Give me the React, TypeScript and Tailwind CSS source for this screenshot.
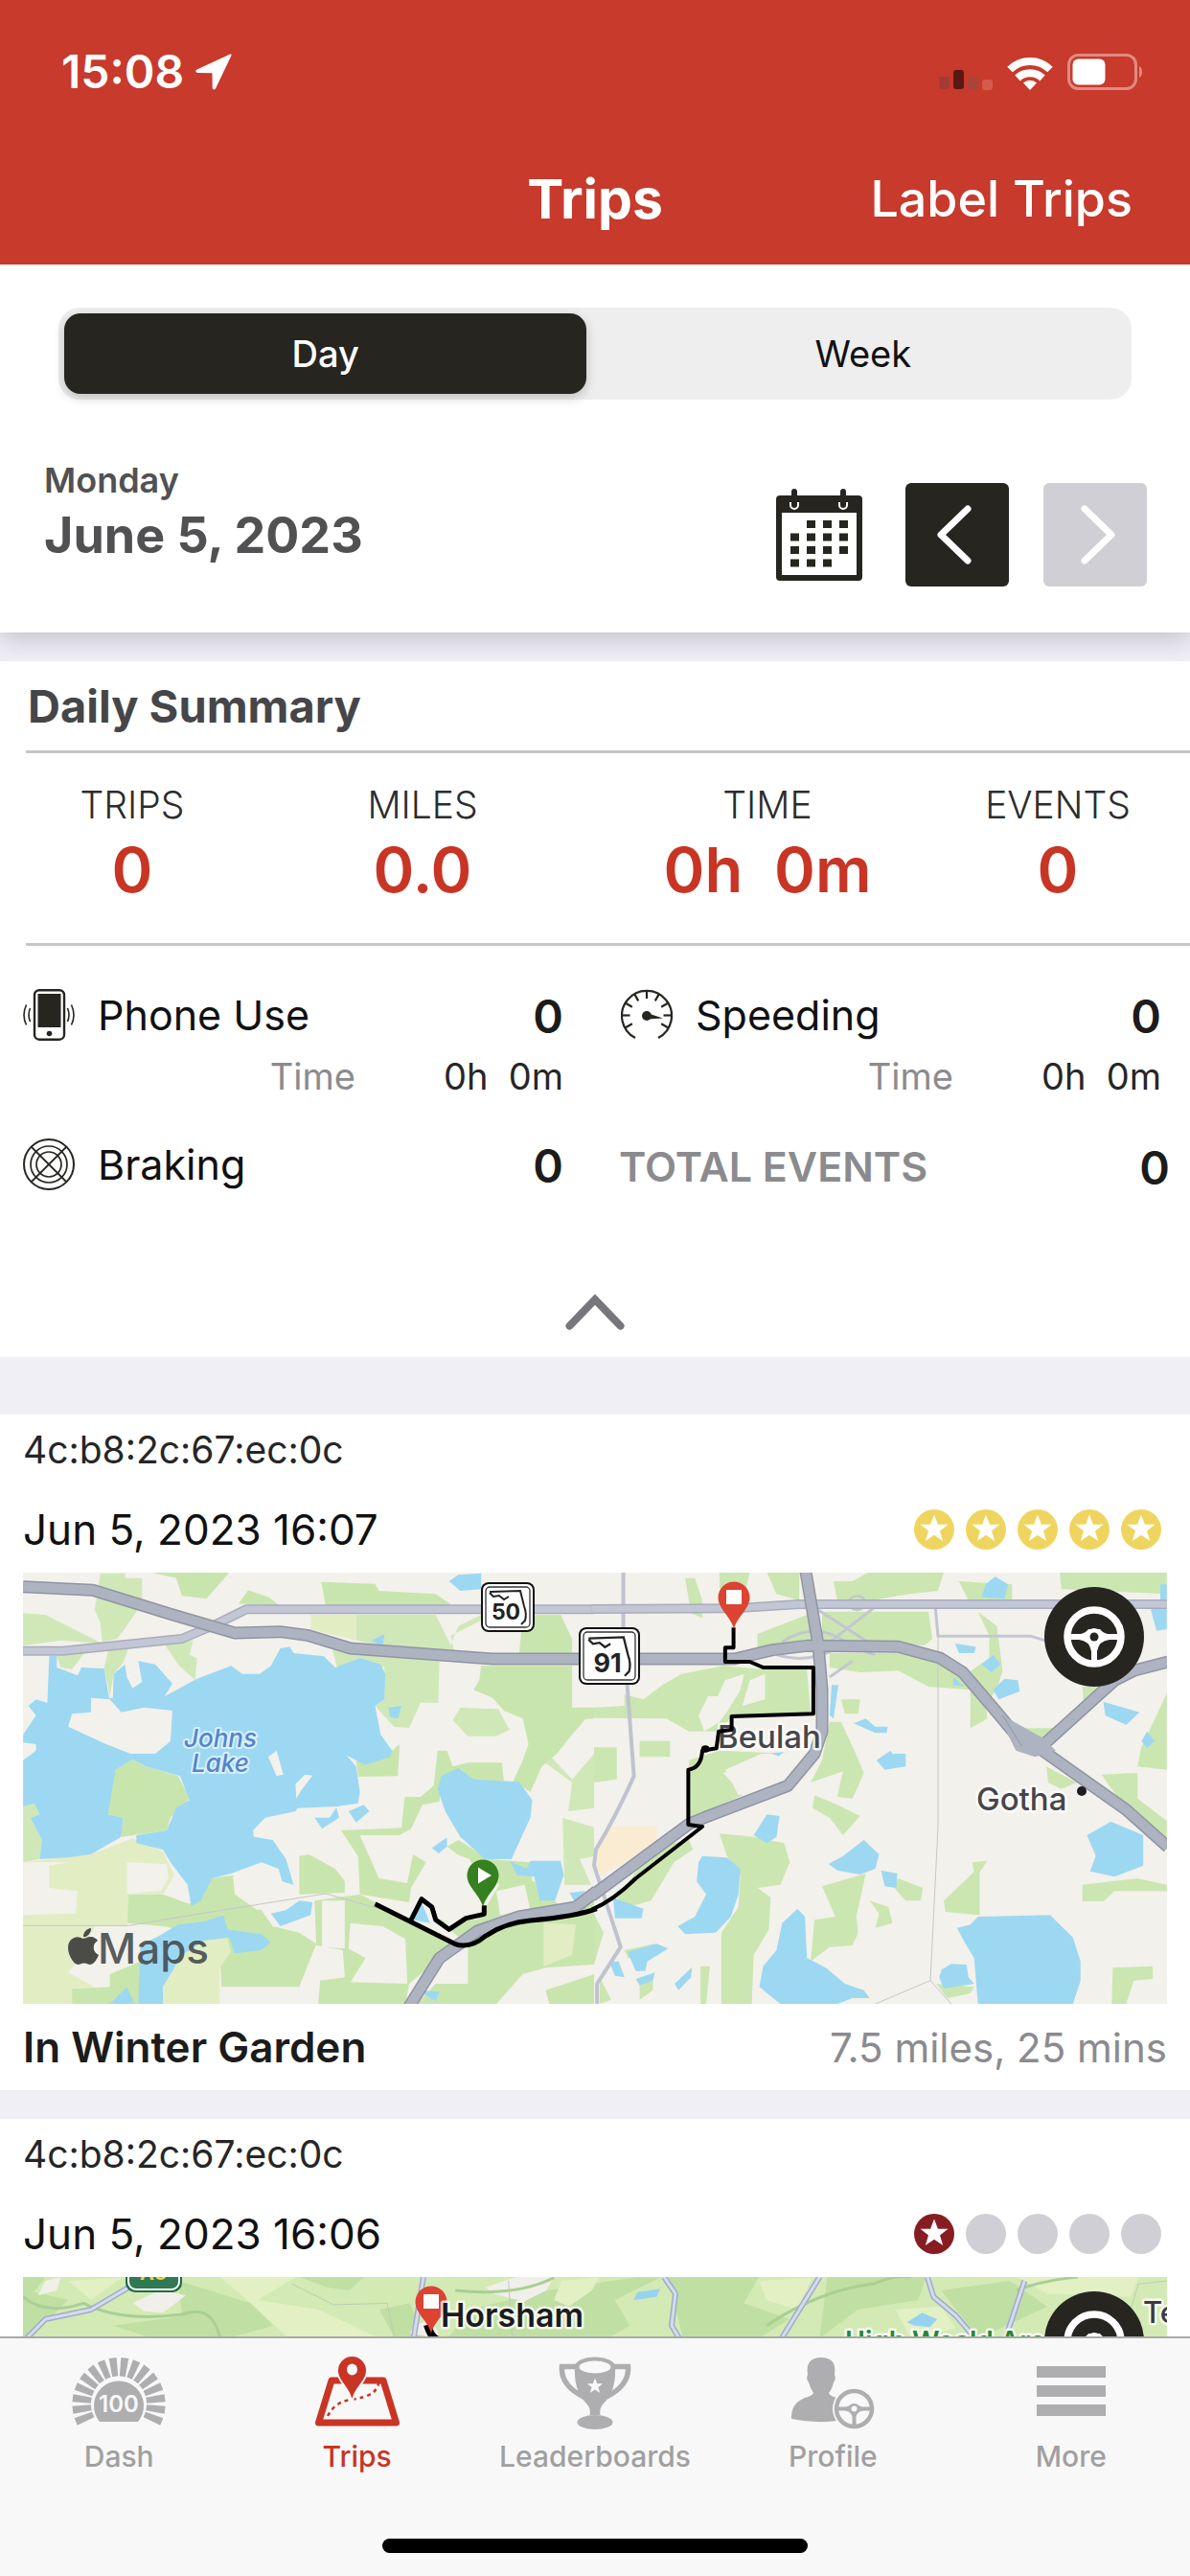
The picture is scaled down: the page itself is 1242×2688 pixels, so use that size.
import React from "react";
import { FaApple } from "react-icons/fa";

const STAR =
  "M21 5.500l3.900 10.300h10.600l-8.500 6.600 3.200 10.600-9.200-6.300-9.200 6.300 3.200-10.600-8.500-6.600h10.600z";

function LocationArrow() {
  return (
    <svg viewBox="0 0 38 38" className="h-[38px] w-[38px]" fill="#fff" aria-hidden="true">
      <path d="M36.2 0.6 1.6 16.600c-2 1-1.500 3.300.7 3.400l14.600.2c.4 0 .6.2.6.6l.2 14.600c.1 2.300 2.600 2.700 3.500.7L37.400 1.900c.5-1.100-.200-1.800-1.200-1.300z" />
    </svg>
  );
}

function SignalBars() {
  return (
    <svg viewBox="0 0 56 22" className="h-[22px] w-14" aria-hidden="true">
      <rect x="0" y="8" width="11" height="13" rx="2" fill="#a53c31" />
      <rect x="15" y="1" width="11" height="20" rx="3" fill="#5b1813" />
      <rect x="30" y="8" width="11" height="13" rx="3" fill="#a8443a" />
      <rect x="45" y="11" width="11" height="11" rx="3" fill="#d65b4c" />
    </svg>
  );
}

function Wifi() {
  return (
    <svg viewBox="0 0 50 36" className="h-9 w-[50px]" aria-hidden="true">
      <g fill="none" stroke="#fff" strokeWidth="8">
        <path d="M4 14.500a30 30 0 0 1 42 0" />
        <path d="M12 23.500a19 19 0 0 1 26 0" />
      </g>
      <path d="M25 36l-7-7.500a10 10 0 0 1 14 0z" fill="#fff" />
    </svg>
  );
}

function Battery() {
  return (
    <svg viewBox="0 0 80 38" className="h-[38px] w-20" aria-hidden="true">
      <rect x="1.500" y="1.500" width="70" height="35" rx="10" fill="none" stroke="#e08a80" strokeWidth="3" />
      <rect x="5.500" y="5.500" width="34" height="27" rx="6" fill="#fff" />
      <path d="M75 13c4 1.500 4 10.500 0 12z" fill="#e08a80" />
    </svg>
  );
}

function CalendarIcon() {
  const dots: number[][] = [
    [1, 0], [2, 0], [3, 0],
    [0, 1], [1, 1], [2, 1], [3, 1],
    [0, 2], [1, 2], [2, 2], [3, 2],
    [0, 3], [1, 3], [2, 3],
  ];
  return (
    <svg viewBox="0 0 90 96" className="h-24 w-[90px]" aria-hidden="true">
      <rect y="7" width="90" height="89" rx="4" fill="#262520" />
      <rect x="6" y="25" width="78" height="65" fill="#fff" />
      <rect x="16" y="0" width="6" height="17" rx="3" fill="#262520" />
      <rect x="67" y="0" width="6" height="17" rx="3" fill="#262520" />
      <path d="M15 14v3a4 4 0 0 0 8 0v-3M66 14v3a4 4 0 0 0 8 0v-3" fill="none" stroke="#fff" strokeWidth="2" />
      {dots.map(([c, r]) => (
        <rect key={`${c}-${r}`} x={15 + c * 17} y={33 + r * 13.500} width="9" height="8" fill="#262520" />
      ))}
    </svg>
  );
}

function PhoneIcon() {
  return (
    <svg viewBox="0 0 54 54" className="size-[54px]" fill="none" stroke="#262520" aria-hidden="true">
      <rect x="12" y="1.200" width="31" height="51.500" rx="5" strokeWidth="2.400" />
      <rect x="15.500" y="5" width="24" height="35" fill="#262520" stroke="none" />
      <circle cx="27.500" cy="46.500" r="2.800" fill="#262520" stroke="none" />
      <path d="M7.500 20q-3 7 0 14M3.500 16.500q-5 11 0 21M46.500 20q3 7 0 14M50.500 16.500q5 11 0 21" strokeWidth="1.600" />
    </svg>
  );
}

function SpeedIcon() {
  const ticks = [-120, -90, -60, -30, 0, 30, 60, 90, 120];
  return (
    <svg viewBox="0 0 54 54" className="size-[54px]" fill="none" stroke="#262520" strokeWidth="2.200" aria-hidden="true">
      <path d="M15 51A26 26 0 1 1 39 51" />
      {ticks.map((a) => (
        <path key={a} d="M27 2v8" transform={`rotate(${a} 27 27.500)`} />
      ))}
      <circle cx="27" cy="28" r="5" fill="#262520" stroke="none" />
      <path d="M27 25l17 5.500-17 1z" fill="#262520" stroke="none" />
    </svg>
  );
}

function BrakeIcon() {
  return (
    <svg viewBox="0 0 54 54" className="size-[54px]" fill="none" stroke="#262520" strokeWidth="1.700" aria-hidden="true">
      <circle cx="27" cy="27" r="26" strokeWidth="2" />
      <circle cx="27" cy="27" r="19" />
      <circle cx="27" cy="27" r="13" />
      <path d="M8.600 8.600l36.800 36.800M45.400 8.600L8.600 45.400" strokeWidth="2" />
    </svg>
  );
}

function Wheel({ cx, cy }: { cx: number; cy: number }) {
  return (
    <g transform={`translate(${cx} ${cy})`}>
      <circle r="52" fill="#262520" />
      <circle r="28" fill="none" stroke="#fff" strokeWidth="7.500" />
      <path d="M-26-3h12q5-1 8-5h12q3 4 8 5h12v6h-10q-11 1-13 12v14h-6v-14q-2-11-13-12h-10z" fill="#fff" />
      <circle r="9" fill="#fff" />
      <circle r="4.500" fill="#262520" />
    </g>
  );
}

function Pin({ x, y, kind }: { x: number; y: number; kind: "start" | "end" }) {
  return (
    <g transform={`translate(${x} ${y})`}>
      <path
        d="M0 33C-3 20-16.500 12-16.500 0a16.500 16.500 0 0 1 33 0C16.500 12 3 20 0 33z"
        fill={kind === "start" ? "#35801f" : "#dc4331"}
      />
      {kind === "start" ? (
        <path d="M-5-8.500v17L9 0z" fill="#fff" />
      ) : (
        <rect x="-8" y="-8" width="16" height="15" fill="#fff" />
      )}
    </g>
  );
}

function Shield({ x, y, w, h, label, size }: { x: number; y: number; w: number; h: number; label: string; size: number }) {
  return (
    <g transform={`translate(${x} ${y})`}>
      <rect width={w} height={h} rx="8" fill="#111" />
      <rect x="2" y="2" width={w - 4} height={h - 4} rx="6" fill="#fff" />
      <rect x="5" y="5" width={w - 10} height={h - 10} rx="4" fill="none" stroke="#333" strokeWidth="1.300" />
      <g transform={`scale(${w / 56} ${h / 52})`} fill="none" stroke="#222" strokeWidth="2">
        <path d="M9 10l32-1 4 16q3 8 1 15l-4 4M9 11l4 4 6-1 5 4 5-3" />
      </g>
      <text x={w / 2 - 2} y={h - 13} textAnchor="middle" fontSize={size} fontWeight="700" fill="#222" stroke="#fff" strokeWidth="3" paintOrder="stroke">
        {label}
      </text>
    </g>
  );
}

/* Western half: drawn in a finer grid and scaled into the map. */
const westLightGreen = [
  "61,160 120,165 270,255 160,245 61,262",
  "265,35 330,35 330,50 375,50 375,130 340,190 310,240 270,250 265,190 250,150",
  "150,295 235,265 190,335 160,330", "290,255 345,250 325,315 300,350 290,420 275,330",
  "430,250 510,245 500,290 520,300 515,370 470,320",
  "940,165 1150,165 1190,260 1210,200 1270,165 1300,165 1190,230 1200,285 1040,270 940,245",
  "870,240 1160,290 1157,440 1110,440 1080,520 1040,515 990,450 1015,430 1015,330 950,300 890,330",
  "1195,495 1215,455 1315,460 1345,525 1310,545 1235,545",
  "1430,620 1455,610 1510,680 1568,600 1568,770 1500,780 1510,690",
  "1485,800 1568,830 1568,920 1530,930 1560,1010 1490,1010 1488,930",
  "61,760 90,755 105,790 80,800 110,870 105,930 61,940",
];
const westGreen = [
  "400,33 605,33 545,115 480,105 465,50",
  "848,62 990,68 1000,90 1150,100 1200,140 860,138",
  "630,130 655,88 710,110 740,138",
  "1270,325 1510,325 1510,455 1568,455 1568,490 1545,492 1510,540 1470,600 1430,640 1400,720 1355,685 1380,620 1395,570 1380,490 1330,465 1300,425 1250,400 1265,370",
  "1380,165 1480,165 1510,240 1510,290 1370,290",
  "1155,590 1180,590 1195,640 1235,628 1325,628 1330,685 1250,690 1210,650 1165,690 1160,750 1115,760 1085,835 1055,855 950,855 1000,990 1075,1005 1090,915 1125,940 1085,1020 1080,1065 950,1040 945,920 900,840 1060,832 1068,735 1110,735 1145,700",
  "940,620 1010,615 1055,570 1050,670 945,672",
  "790,920 815,915 885,960 910,1000 910,1035 790,1040",
  "305,650 350,618 385,640 470,670 500,740 450,800 440,840 320,860 325,800 285,790 290,700",
  "335,1040 430,1040 500,1070 560,990 615,980 625,1040 690,1090 720,1140 790,1160 835,1195 790,1330 585,1330 580,1230 600,1180 430,1140 335,1130",
  "830,1060 950,1040 1100,1130 1200,1200 1160,1240 1080,1320 1070,1383 840,1383 845,1310 910,1300 905,1215 835,1200",
  "1160,1120 1260,1120 1330,990 1410,1000 1490,1090 1568,1060 1568,1260 1440,1270 1380,1290 1310,1383 1100,1383 1150,1320 1235,1320 1235,1200",
  "1130,1040 1160,960 1190,950 1150,1060", "1180,890 1210,870 1290,930 1400,940 1410,1060 1300,1000",
  "190,1335 290,1330 290,1290 370,1250 430,1250 430,1383 190,1383",
  "1440,1340 1568,1290 1568,1383 1450,1383",
];
const westYellow = [
  "820,165 940,165 940,245 870,225 820,210",
  "61,940 240,915 350,865 430,905 460,980 430,1040 340,1040 335,1140 61,1140",
  "61,1140 250,1140 190,1285 250,1330 190,1335 190,1383 61,1383",
  "470,1190 600,1175 610,1220 580,1270 580,1383 430,1383 430,1330",
  "1435,1130 1520,1135 1510,1230 1435,1265",
];
const westLand = [
  "335,940 440,945 445,990 425,1030 335,1038", "61,940 185,940 130,950 130,1020 205,1030 200,1100 61,1105",
  "615,985 690,940 735,960 745,1000 775,1010 730,1060 680,1090 620,1040",
  "925,1130 1010,1140 1070,1180 1075,1320 925,1315 965,1240 920,1210",
  "1095,1030 1180,905 1240,930 1290,1050 1240,1110 1185,1140",
  "1310,1030 1385,1010 1400,1090 1320,1105", "180,1285 245,1190 250,1330",
  "850,1060 910,1060 910,1210 850,1205",
];
const westWater = [
  "130,293 150,293 150,330 205,355 215,330 275,333 288,425 298,425 300,350 330,320 335,360 350,395 375,375 365,310 410,320 455,380 435,420 520,365 610,325 640,350 685,350 715,325 740,270 765,265 775,285 855,295 885,330 950,300 1005,320 1017,350 1015,430 990,450 1005,540 1035,590 1030,610 965,635 915,605 940,640 950,720 945,755 890,765 785,770 780,780 700,800 668,840 670,860 720,870 755,930 775,1010 745,1000 735,960 690,940 610,975 560,990 530,1060 505,1078 495,1010 450,940 430,900 360,880 360,855 440,840 465,770 500,745 475,670 385,640 350,618 305,650 285,790 325,800 320,860 240,915 180,925 105,930 110,870 80,800 105,790 90,755 61,765 61,620 95,590 95,570 61,565 61,540 95,480 75,450 95,430 125,440",
  "1155,710 1165,670 1210,645 1250,680 1370,688 1405,745 1400,800 1350,930 1280,930 1215,860 1175,780",
  "1345,935 1390,960 1400,935 1480,935 1488,980 1465,1060 1425,1060 1410,985 1365,980",
  "1185,60 1210,40 1270,35 1270,85 1215,90", "1025,455 1060,450 1050,490 1030,485",
  "980,245 1015,225 1010,265", "1140,895 1180,862 1180,890 1158,912",
  "715,1100 755,1090 790,1060 825,1065 820,1105 740,1140",
  "365,1383 370,1200 420,1170 470,1135 540,1125 590,1105 600,1150 690,1165 715,1190 690,1215 620,1225 605,1175 540,1185 480,1230 430,1330 430,1383",
  "290,1383 335,1330 355,1383", "1100,1340 1160,1345 1150,1375", "1090,1120 1115,1070 1135,1130",
  "830,800 870,800 888,768 895,800 850,835", "920,780 960,760 975,780 940,815", "1503,1035 1545,1030 1520,1070",
];
const westIslands = [
  "180,515 190,475 240,470 240,425 290,430 320,470 380,455 455,465 450,560 410,600 345,600 280,570",
  "708,610 730,590 748,665 730,670", "782,740 780,695 805,665 825,668 795,715",
];

/* Eastern half. */
const eastGreen = [
  "0,455 80,450 80,415 130,430 180,385 230,350 340,325 440,335 560,335 570,475 365,480 330,530 250,530 190,490 0,488",
  "240,50 265,50 285,120 285,175 255,160", "330,33 410,33 400,80 330,80", "455,33 540,33 540,120 480,100",
  "630,60 680,60 720,33 920,33 905,90 830,100 730,120 640,120",
  "600,155 880,155 890,240 870,260 680,255 600,250", "430,225 560,165 580,250 430,270",
  "620,330 700,345 800,340 880,390 990,400 990,520 1035,490 1030,440 1060,400 1075,340 1060,200 1010,155 1040,230 1040,300 980,350 860,285 620,285",
  "0,580 60,580 60,680 0,690", "120,560 200,560 200,610 120,610",
  "250,620 330,590 520,600 400,630 340,660 370,700 390,730 300,780 250,800",
  "650,430 700,430 695,475 660,475", "620,500 650,500 685,590 710,660 680,740 640,735 655,655 570,690 600,620",
  "580,730 640,760 700,795 655,855 620,800 575,770",
  "330,850 420,860 500,880 515,940 490,1010 430,1020 465,1050 460,1150 420,1230 415,1383 335,1383 335,1160 380,1080 385,980 350,920",
  "600,1015 715,975 690,1110 695,1160 680,1200 620,1205 570,1250 580,1120 635,1110",
  "800,990 865,1020 860,1060 820,1060 790,1020", "725,1060 775,1080 785,1130 740,1145 750,1100",
  "920,1060 1000,970 995,940 1035,935 1015,970 1015,1105 925,1095", "1285,1010 1430,990 1507,1010 1507,1030 1370,1030 1340,1062 1285,1062",
  "1365,1270 1470,1265 1470,1305 1420,1310 1400,1383 1362,1383",
  "1190,640 1270,690 1230,710 1195,690", "1090,520 1220,520 1180,580", "1430,640 1440,580 1480,480 1507,410 1507,650",
  "1335,665 1430,660 1430,740 1507,810 1507,870 1410,790", "1225,33 1507,33 1507,100 1230,85", "1285,390 1360,390 1290,470",
  "160,890 250,870 260,900 210,940 150,1060 90,1080 60,1050", "0,1100 25,1160 0,1260", "15,1300 45,1370 15,1383",
  "280,1265 305,1265 295,1383 280,1383", "900,1320 1000,1330 990,1350 930,1365", "80,1215 160,1195 150,1240 90,1240", "120,1320 155,1310 155,1340 120,1370",
  "960,60 1100,70 1100,120 985,120",
];
const eastLand = [
  "345,370 395,350 385,400 355,460 330,500 290,530 275,480 300,420 325,420",
  "410,370 450,350 450,430 390,450", "345,650 440,600 530,600 510,650 420,720 380,730",
];
const eastWater = [
  "285,920 350,925 385,960 380,1040 360,1110 320,1160 240,1165 220,1140 265,1110 295,1040 270,1000 275,940",
  "535,1085 555,1110 560,1240 610,1270 660,1320 710,1340 725,1365 680,1365 640,1383 490,1383 435,1330 445,1265 480,1215 495,1130",
  "1010,1110 1200,1105 1260,1175 1280,1250 1280,1310 1260,1383 1010,1383 1000,1240 975,1190 955,1145 990,1135",
  "915,1275 940,1258 980,1260 985,1300 1000,1320 920,1335 908,1300",
  "710,870 750,915 740,960 700,978 640,965 617,945 655,920", "755,965 798,975 795,1020 765,1015",
  "455,790 488,795 480,860 455,880 420,855", "1360,812 1445,855 1445,950 1370,985 1305,968 1320,920 1297,855",
  "1340,437 1435,470 1400,510 1345,480", "1455,530 1475,560 1455,582 1440,560", "1055,45 1090,70 1080,115 1020,110 1030,70",
  "1490,70 1507,70 1507,210 1480,215 1465,150 1490,120", "950,255 1005,265 1000,285 960,285", "1020,320 1050,290 1070,320 1045,345",
  "1050,400 1080,365 1115,370 1120,405 1065,430", "945,360 975,390 945,385", "683,505 715,490 740,515 773,515 770,535 740,535",
  "743,620 780,590 785,600 820,600 820,640 765,650", "625,385 643,385 630,490 620,480", "50,1050 130,1085 125,1115 55,1115",
  "88,1220 165,1195 195,1210 140,1250 135,1280 110,1280", "40,1250 65,1250 80,1300 55,1295", "110,1305 160,1285 155,1310 120,1325",
  "212,1320 258,1268 255,1300 222,1340", "465,598 500,595 485,608",
];

function Shapes({ points, fill }: { points: string[]; fill: string }) {
  return (
    <g fill={fill}>
      {points.map((p) => (
        <polygon key={p} points={p} />
      ))}
    </g>
  );
}

function Lines({ paths, color, width }: { paths: string[]; color: string; width: number }) {
  return (
    <g fill="none" stroke={color} strokeWidth={width} strokeLinejoin="round">
      {paths.map((d) => (
        <path key={d} d={d} vectorEffect="non-scaling-stroke" />
      ))}
    </g>
  );
}

const westMinor = ["M61 278H165L480 240 560 200 650 148H1568"];
const westMajor = [
  "M61 77L245 88 450 163 620 222 740 218 815 230 925 270 1300 303H1575",
  "M1078 1395L1160 1240 1260 1155 1370 1110 1520 1080 1575 1030",
];
const westRoute = [
  "M990 1070L1200 1195Q1240 1212 1280 1172 1330 1130 1400 1122 1520 1110 1575 1085",
  "M1085 1120L1113 1055 1140 1080 1150 1120 1185 1150 1230 1115 1278 1102V1075",
];
const eastMinor = ["M-6 147L370 145 540 132H1507"];
const eastMajor = [
  "M0 303H370L470 275 560 262 800 265 910 300 970 345 1060 470 1130 570 1180 590 1400 775 1510 892",
  "M-6 1045L250 820 290 800 510 700 580 600 600 530V400L590 260 557 30",
  "M1175 580L1370 370 1420 340 1510 312",
];
const eastRoute = [
  "M-6 1088Q50 1060 110 990L285 828 248 822V650Q282 645 285 590L322 583 328 530 362 525V483L577 475V330H445L410 312H345V268H367V205",
];
const eastLanes = [
  "M77 33V220M87 380L105 670Q60 790 5 900L0 950 70 1205 8 1320V1383",
];
const eastTrails = [
  "M898 140L905 232H1150L1200 250M590 150L720 250M740 140L610 260M495 250Q570 190 640 235T740 290M480 290Q560 320 640 270M620 360L680 310",
];
const eastHair = ["M905 232V830L885 1310 740 1383M885 1310L940 1383"];

function WinterGardenMap() {
  return (
    <svg viewBox="0 0 1194 450" className="block h-auto w-full" role="img" aria-label="Trip route in Winter Garden">
      <rect width="1194" height="450" fill="#f3f1eb" />
      <g transform="translate(-24 -11) scale(0.39541 0.33333)">
        <Shapes points={westLightGreen} fill="#d0e8b8" />
        <Shapes points={westGreen} fill="#c9e5ae" />
        <Shapes points={westYellow} fill="#e2edc4" />
        <Shapes points={westLand} fill="#f3f1eb" />
        <Shapes points={westWater} fill="#9dd8f2" />
        <Shapes points={westIslands} fill="#f3f1eb" />
        <Lines paths={["M61 1138H340L480 1110 860 1038 1000 1085"]} color="#c6c6ca" width={1} />
      </g>
      <g transform="translate(596 -11) scale(0.39668 0.33333)">
        <Shapes points={["30,830 165,825 165,880 20,980 5,960 10,900", "1385,40 1460,35 1455,65 1420,75"]} fill="#faecd2" />
        <Shapes points={eastGreen} fill="#cbe6b1" />
        <Shapes points={eastLand} fill="#f3f1eb" />
        <Shapes points={eastWater} fill="#9dd8f2" />
        <Lines paths={eastHair} color="#c6c6ca" width={1} />
        <Lines paths={eastTrails} color="#c3c6d2" width={3} />
        <Lines paths={eastLanes} color="#bfc3cf" width={4} />
        <circle cx="692" cy="128" r="22" fill="none" stroke="#c3c6d2" strokeWidth="7" />
      </g>
      <g transform="translate(-24 -11) scale(0.39541 0.33333)">
        <Lines paths={westMinor} color="#a8acbd" width={10} />
        <Lines paths={westMinor} color="#c3c6d5" width={7} />
      </g>
      <g transform="translate(596 -11) scale(0.39668 0.33333)">
        <Lines paths={eastMinor} color="#a8acbd" width={10} />
        <Lines paths={eastMinor} color="#c3c6d5" width={7} />
        <Lines paths={eastMajor} color="#9095a3" width={13} />
      </g>
      <g transform="translate(-24 -11) scale(0.39541 0.33333)">
        <Lines paths={westMajor} color="#9095a3" width={13} />
        <Lines paths={westMajor} color="#aeb3c2" width={10} />
      </g>
      <g transform="translate(596 -11) scale(0.39668 0.33333)">
        <Lines paths={eastMajor} color="#aeb3c2" width={10} />
        <polygon points="1060,470 1180,550 1215,590 1160,610 1110,590" fill="#aeb3c2" />
        <Lines paths={["M1075 480L1125 575"]} color="#9095a3" width={1} />
      </g>
      <g fontFamily="Inter, sans-serif">
        <text x="725" y="183" fontSize="33" fontWeight="500" fill="#46464a" stroke="#fff" strokeOpacity="0.8" strokeWidth="5" strokeLinejoin="round" paintOrder="stroke">
          Beulah
        </text>
        <text x="995" y="248" fontSize="33" fontWeight="500" fill="#46464a" stroke="#fff" strokeOpacity="0.8" strokeWidth="5" strokeLinejoin="round" paintOrder="stroke">
          Gotha
        </text>
        <circle cx="1105" cy="228" r="5" fill="#1d1d1f" />
        <g fontSize="26" fontWeight="500" fontStyle="italic" fill="#5285cc" stroke="#d9f0fb" strokeWidth="4" strokeLinejoin="round" paintOrder="stroke" textAnchor="middle">
          <text x="206" y="182">Johns</text>
          <text x="206" y="208">Lake</text>
        </g>
        <text x="78" y="408" fontSize="44" fontWeight="500" fill="#44484a" fillOpacity="0.9">
          Maps
        </text>
        <Shield x={478} y={10} w={56} h={52} label="50" size={23} />
        <Shield x={580} y={57} w={64} h={60} label="91" size={27} />
      </g>
      <g transform="translate(44 371)">
        <FaApple size={38} color="#4b4c47" viewBox="0 32 384 448" width={32} />
      </g>
      <g strokeLinejoin="miter">
        <g transform="translate(-24 -11) scale(0.39541 0.33333)">
          <Lines paths={westRoute} color="#000" width={5} />
        </g>
        <g transform="translate(596 -11) scale(0.39668 0.33333)">
          <Lines paths={eastRoute} color="#000" width={4} />
          <circle cx="293" cy="585" r="11" />
        </g>
      </g>
      <Pin x={480} y={316} kind="start" />
      <Pin x={742} y={26} kind="end" />
      <Wheel cx={1118} cy={67} />
    </svg>
  );
}

function HorshamMap() {
  return (
    <svg viewBox="0 0 1194 450" className="block h-auto w-full" role="img" aria-label="Trip route near Horsham">
      <rect width="1194" height="450" fill="#d3eab5" />
      <g transform="translate(-24 -286) scale(0.79208 0.33333)">
        <Shapes
          points={[
            "30,858 60,858 45,905 90,930 60,1000 30,1050", "235,870 330,940 360,1010 300,1050 200,1050 150,1010 240,980",
            "395,858 480,858 460,900 430,890", "590,1050 620,960 720,900 840,858 870,860 810,930 830,1010 800,1050",
            "880,858 1000,858 980,940 1040,990 1000,1050 900,1050", "1090,858 1220,858 1210,930 1130,960 1080,1050",
            "1240,900 1330,870 1380,950 1290,1050", "500,960 540,940 560,1050 520,1050",
          ]}
          fill="#c0dfa3"
        />
        <Shapes
          points={[
            "290,858 390,858 340,930 420,960 500,1050 380,1050 340,960", "740,870 790,858 780,900 750,950 730,930",
            "1000,870 1070,860 1050,960 1010,930", "1340,858 1500,858 1490,920 1380,910", "90,870 160,860 120,930", "1180,960 1240,950 1260,1020 1200,1050",
          ]}
          fill="#e2f0c4"
        />
        <Shapes points={["60,870 80,858 75,900 50,915", "175,940 210,900 245,915 215,970 190,965", "640,890 680,858 730,858 720,900 690,935 650,910", "545,1010 570,990 580,1050 540,1035"]} fill="#f0efe9" />
        <Shapes points={["840,905 870,895 865,920 835,930", "1195,1000 1215,970 1235,990 1225,1015 1205,1010"]} fill="#97d3f0" />
        <Lines paths={["M30 920Q60 980 110 940 160 1000 240 975 280 940 290 1050M600 900Q680 920 730 860M1010 1010Q1080 900 1150 880 1180 850 1200 858M1340 900Q1370 870 1420 858"]} color="#a9cf93" width={3} />
        <Lines paths={["M385 880L440 945 510 940 520 1050M1490 960L1500 880 1538 870M670 870L675 1050"]} color="#bccdb2" width={1} />
        <Lines paths={["M35 1050L60 990 120 960 170 890M558 858L545 1050M875 858L890 910 885 1010 895 1050M1080 858L1030 1050M1222 858L1230 920 1260 980 1285 1050M1350 870L1325 1050"]} color="#9fabd0" width={6} />
        <Lines paths={["M35 1050L60 990 120 960 170 890M558 858L545 1050M875 858L890 910 885 1010 895 1050M1080 858L1030 1050M1222 858L1230 920 1260 980 1285 1050M1350 870L1325 1050"]} color="#d5dbe9" width={3} />
      </g>
      <g fontFamily="Inter, sans-serif">
        <rect x="107" y="-24" width="59" height="40" rx="10" fill="#1f6b45" />
        <rect x="110" y="-24" width="53" height="37" rx="8" fill="#2f7a53" stroke="#fff" strokeWidth="2" />
        <text x="136" y="3" textAnchor="middle" fontSize="20" fontWeight="700" fill="#f2d43b">A3</text>
        <path d="M422 50q4 14 12 16" fill="none" stroke="#000" strokeWidth="8" />
        <Pin x={426} y={26} kind="end" />
        <g stroke="#fff" strokeOpacity="0.8" strokeWidth="5" strokeLinejoin="round" paintOrder="stroke">
          <text x="436" y="52" fontSize="34" fontWeight="600" fill="#1b1b1d">Horsham</text>
          <text x="1169" y="48" fontSize="31" fontWeight="500" fill="#3b3b3e">Te</text>
          <text x="858" y="77" fontSize="28" fontWeight="600" fill="#1f8a34">High Weald Area</text>
        </g>
      </g>
      <Wheel cx={1118} cy={67} />
    </svg>
  );
}

function Stars({ filled, color }: { filled: number; color: string }) {
  return (
    <div className="flex gap-3 pr-1.5" role="img" aria-label={`${filled} of 5 stars`}>
      {[0, 1, 2, 3, 4].map((i) => (
        <svg key={i} viewBox="0 0 42 42" className="size-[42px]">
          <circle cx="21" cy="21" r="21" fill={i < filled ? color : "#d0cfd5"} />
          {i < filled && <path d={STAR} fill="#fff" />}
        </svg>
      ))}
    </div>
  );
}

function TripCard(props: {
  device: string;
  when: string;
  stars: number;
  starColor: string;
  map: React.ReactNode;
  place?: string;
  detail?: string;
}) {
  return (
    <article className="bg-white px-6 pt-3">
      <p className="text-[39px] leading-[50px] text-[#262626]">{props.device}</p>
      <div className="mt-7 mb-[15px] flex h-[60px] items-center justify-between">
        <h3 className="text-[44px] leading-[60px] text-[#111]">{props.when}</h3>
        <Stars filled={props.stars} color={props.starColor} />
      </div>
      {props.map}
      {props.place && (
        <div className="flex h-[90px] items-center justify-between">
          <p className="text-[44px] font-semibold text-[#1c1c1a]">{props.place}</p>
          <p className="text-[42px] text-[#8b8b8e]">{props.detail}</p>
        </div>
      )}
    </article>
  );
}

function Stat({ label, value }: { label: string; value: string }) {
  return (
    <div className="text-center">
      <dt className="text-[39px] leading-[48px] font-light text-[#2c2c2c]">{label}</dt>
      <dd className="mt-1 text-[65px] leading-[80px] font-semibold whitespace-pre text-[#c83524]">{value}</dd>
    </div>
  );
}

function EventRow({ icon, label, count, time }: { icon: React.ReactNode; label: string; count: string; time?: string }) {
  return (
    <div>
      <div className="flex h-[54px] items-center gap-6">
        {icon}
        <span className="flex-1 text-[43px] text-[#111]">{label}</span>
        <span className="pt-1 text-[48px] font-semibold text-[#1c1c1a]">{count}</span>
      </div>
      {time && (
        <div className="mt-[13px] flex justify-end gap-[92px] text-[38px] leading-[48px]">
          <span className="text-[#8b8b8e]">Time</span>
          <span className="whitespace-pre text-[#262626]">{time}</span>
        </div>
      )}
    </div>
  );
}

function DashIcon() {
  const angles = Array.from({ length: 16 }, (_, i) => -112.5 + i * 15);
  return (
    <svg viewBox="0 0 98 76" className="h-[76px] w-[98px]" aria-hidden="true">
      {angles.map((a) => (
        <path key={a} d="M-4-48.500h8L3-29h-6z" transform={`translate(49 49.500) rotate(${a})`} fill="#aeaeb1" />
      ))}
      <path d="M29 68a26 26 0 1 1 40 0z" fill="#aeaeb1" />
      <text x="49" y="58" textAnchor="middle" fontFamily="Inter, sans-serif" fontSize="24" fontWeight="600" fill="#f8f8f8">
        100
      </text>
    </svg>
  );
}

function TripsIcon() {
  return (
    <svg viewBox="0 0 90 76" className="h-[76px] w-[90px]" aria-hidden="true">
      <path d="M18 25h54l13.500 44h-81z" fill="none" stroke="#c83524" strokeWidth="7" strokeLinejoin="round" />
      <path d="M14 62Q22 47 38 45T62 37Q67 32 68 24" fill="none" stroke="#c83524" strokeWidth="2.500" strokeDasharray="4 4" />
      <path
        d="M39.500 44C36 31 25 25 25 14.500a14.500 14.500 0 0 1 29 0C54 25 43 31 39.500 44z"
        fill="#c83524"
        stroke="#f8f8f8"
        strokeWidth="4"
        paintOrder="stroke"
      />
      <ellipse cx="39.500" cy="13.500" rx="5.500" ry="6" fill="#f8f8f8" />
    </svg>
  );
}

function TrophyIcon() {
  return (
    <svg viewBox="0 0 76 76" className="size-[76px]" aria-hidden="true">
      <g fill="none" stroke="#aeaeb1" strokeWidth="5.500">
        <path d="M20 10.500H3.500Q2 30 26 42" />
        <path d="M56 10.500h16.500Q74 30 50 42" />
      </g>
      <path d="M17 9C22-2.500 54-2.500 59 9c1 19-3 31-12 40q-5 5-3.500 12h-11Q34 54 29 49C20 40 16 28 17 9z" fill="#aeaeb1" />
      <ellipse cx="38" cy="11" rx="16.500" ry="6.500" fill="#f8f8f8" />
      <ellipse cx="38" cy="68.500" rx="18.500" ry="7.500" fill="#aeaeb1" />
      <path d="M38 22.500l2.200 5.800h6l-4.800 3.700 1.800 6-5.200-3.600-5.200 3.600 1.800-6-4.800-3.700h6z" fill="#f8f8f8" />
    </svg>
  );
}

function ProfileIcon() {
  return (
    <svg viewBox="0 0 90 76" className="h-[76px] w-[90px]" aria-hidden="true">
      <path
        d="M19 19C17 7 22 1 33 1s16 6 14 18q2 4-1 8-2 8-5 11 1 3 8 5C60 46 64 55 64 64q-30 8-62 1C2 54 5 48 16 43q8-2 9-5-3-4-5-11-3-4-1-8z"
        fill="#aeaeb1"
      />
      <circle cx="67.500" cy="54.500" r="22.500" fill="#f8f8f8" />
      <circle cx="67.500" cy="54.500" r="18.500" fill="none" stroke="#aeaeb1" strokeWidth="4.500" />
      <path d="M49 52.500h10q4-1 6-3h5q2 2 6 3h10v4H77q-7 1-7.500 7v10h-4v-10q-.5-6-7.500-7H49z" fill="#aeaeb1" />
      <circle cx="67.500" cy="54.500" r="5.500" fill="#aeaeb1" />
      <circle cx="67.500" cy="54.500" r="3" fill="#f8f8f8" />
    </svg>
  );
}

function MoreIcon() {
  return (
    <svg viewBox="0 0 72 76" className="h-[76px] w-[72px]" fill="#aeaeb1" aria-hidden="true">
      <rect y="10" width="72" height="12" />
      <rect y="30" width="72" height="12" />
      <rect y="50" width="72" height="12" />
    </svg>
  );
}

function Chevron({ direction }: { direction: "left" | "right" }) {
  return (
    <svg viewBox="0 0 44 64" className="h-16 w-11" fill="none" stroke="#fff" strokeWidth="7" strokeLinecap="round" strokeLinejoin="round" aria-hidden="true">
      <path d={direction === "left" ? "M33 5L5 32l28 27" : "M11 5l28 27L11 59"} />
    </svg>
  );
}

const tabs = [
  { label: "Dash", icon: <DashIcon /> },
  { label: "Trips", icon: <TripsIcon />, active: true },
  { label: "Leaderboards", icon: <TrophyIcon /> },
  { label: "Profile", icon: <ProfileIcon /> },
  { label: "More", icon: <MoreIcon /> },
];

export default function App() {
  return (
    <div className="flex h-screen flex-col overflow-hidden bg-[#f0eff5] font-['Inter',sans-serif]">
      <header className="shrink-0 bg-[#c73a2c] text-white">
        <div className="flex h-[140px] items-center justify-between pt-2.5 pr-12 pl-16">
          <div className="flex items-center gap-3">
            <span className="text-[48px] leading-[56px] font-semibold">15:08</span>
            <LocationArrow />
          </div>
          <div className="flex items-end gap-3.5">
            <SignalBars />
            <Wifi />
            <Battery />
          </div>
        </div>
        <div className="grid h-[136px] grid-cols-3 items-center">
          <h1 className="col-start-2 text-center text-[57px] leading-[70px] font-bold">Trips</h1>
          <button type="button" className="justify-self-end pr-[60px] text-[52px] leading-[70px] font-medium whitespace-nowrap">
            Label Trips
          </button>
        </div>
      </header>

      <main className="flex-1 overflow-y-auto [scrollbar-width:none]">
        <section className="relative bg-white pt-[45px] shadow-[0_8px_24px_rgba(60,60,80,0.24)]">
          <div className="mx-[61px] grid h-24 grid-cols-[545fr_560fr] gap-2 rounded-[22px] bg-[#eeeeee] py-1.5 pl-1.5">
            <button type="button" aria-pressed="true" className="rounded-[17px] bg-[#262520] text-[38px] font-medium text-white shadow-[0_4px_12px_rgba(0,0,0,0.2)]">
              Day
            </button>
            <button type="button" aria-pressed="false" className="text-[38px] text-[#111]">
              Week
            </button>
          </div>
          <div className="mt-[62px] flex items-end justify-between pr-[45px] pb-12 pl-[46px]">
            <div className="pb-5 text-[#515153]">
              <p className="text-[36px] leading-[44px] font-semibold">Monday</p>
              <h2 className="mt-[3px] text-[52px] leading-[66px] font-bold">June 5, 2023</h2>
            </div>
            <div className="flex items-center">
              <button type="button" aria-label="Choose date" className="mr-[45px]">
                <CalendarIcon />
              </button>
              <button type="button" aria-label="Previous day" className="mr-9 flex size-[108px] items-center justify-center rounded-md bg-[#262520]">
                <Chevron direction="left" />
              </button>
              <button type="button" aria-label="Next day" disabled className="flex size-[108px] items-center justify-center rounded-md bg-[#d0cfd5]">
                <Chevron direction="right" />
              </button>
            </div>
          </div>
        </section>

        <section className="mt-[30px] bg-white">
          <h2 className="ml-[27px] border-b-[3px] border-[#c6c6c6] pl-0.5 text-[47px] leading-[93px] font-bold text-[#464648]">
            Daily Summary
          </h2>
          <dl className="grid h-[198px] grid-cols-[276fr_330fr_390fr_216fr] pt-[30px] pr-[30px]">
            <Stat label="TRIPS" value="0" />
            <Stat label="MILES" value="0.0" />
            <Stat label="TIME" value="0h  0m" />
            <Stat label="EVENTS" value="0" />
          </dl>
          <div className="ml-[27px] border-b-[3px] border-[#c6c6c6]" />
          <div className="grid grid-cols-2 gap-y-[41px] pt-[45px]">
            <div className="pr-[33px] pl-6">
              <EventRow icon={<PhoneIcon />} label="Phone Use" count="0" time="0h  0m" />
            </div>
            <div className="pr-[30px] pl-[27px]">
              <EventRow icon={<SpeedIcon />} label="Speeding" count="0" time="0h  0m" />
            </div>
            <div className="pr-[33px] pl-6">
              <EventRow icon={<BrakeIcon />} label="Braking" count="0" />
            </div>
            <div className="flex h-[58px] items-center justify-between pr-[21px] pl-[25px]">
              <span className="text-[43px] font-semibold text-[#8b8b8e]">TOTAL EVENTS</span>
              <span className="pt-1 text-[48px] font-semibold text-[#1c1c1a]">0</span>
            </div>
          </div>
          <button type="button" aria-label="Collapse summary" className="mt-[76px] flex h-[94px] w-full items-center justify-center">
            <svg viewBox="0 0 62 38" className="h-[38px] w-[62px]" fill="none" stroke="#77777b" strokeWidth="8" strokeLinecap="round" strokeLinejoin="miter">
              <path d="M4.500 33.500L31 6l26.500 27.500" />
            </svg>
          </button>
        </section>

        <div className="mt-[60px] flex flex-col gap-[30px]">
          <TripCard
            device="4c:b8:2c:67:ec:0c"
            when="Jun 5, 2023 16:07"
            stars={5}
            starColor="#efd560"
            map={<WinterGardenMap />}
            place="In Winter Garden"
            detail="7.5 miles, 25 mins"
          />
          <TripCard device="4c:b8:2c:67:ec:0c" when="Jun 5, 2023 16:06" stars={1} starColor="#861d20" map={<HorshamMap />} />
        </div>
      </main>

      <nav className="shrink-0 border-t-2 border-[#a9a9a9] bg-[#f8f8f8] pt-[19px] pb-6">
        <div className="grid grid-cols-5">
          {tabs.map((t) => (
            <a
              key={t.label}
              href={`#${t.label.toLowerCase()}`}
              aria-current={t.active ? "page" : undefined}
              className={`flex flex-col items-center gap-2.5 text-[30px] leading-9 font-medium ${t.active ? "text-[#c83524]" : "text-[#a0a0a0]"}`}
            >
              {t.icon}
              {t.label}
            </a>
          ))}
        </div>
        <div className="mx-auto mt-[68px] h-[15px] w-[444px] rounded-full bg-black" />
      </nav>
    </div>
  );
}
